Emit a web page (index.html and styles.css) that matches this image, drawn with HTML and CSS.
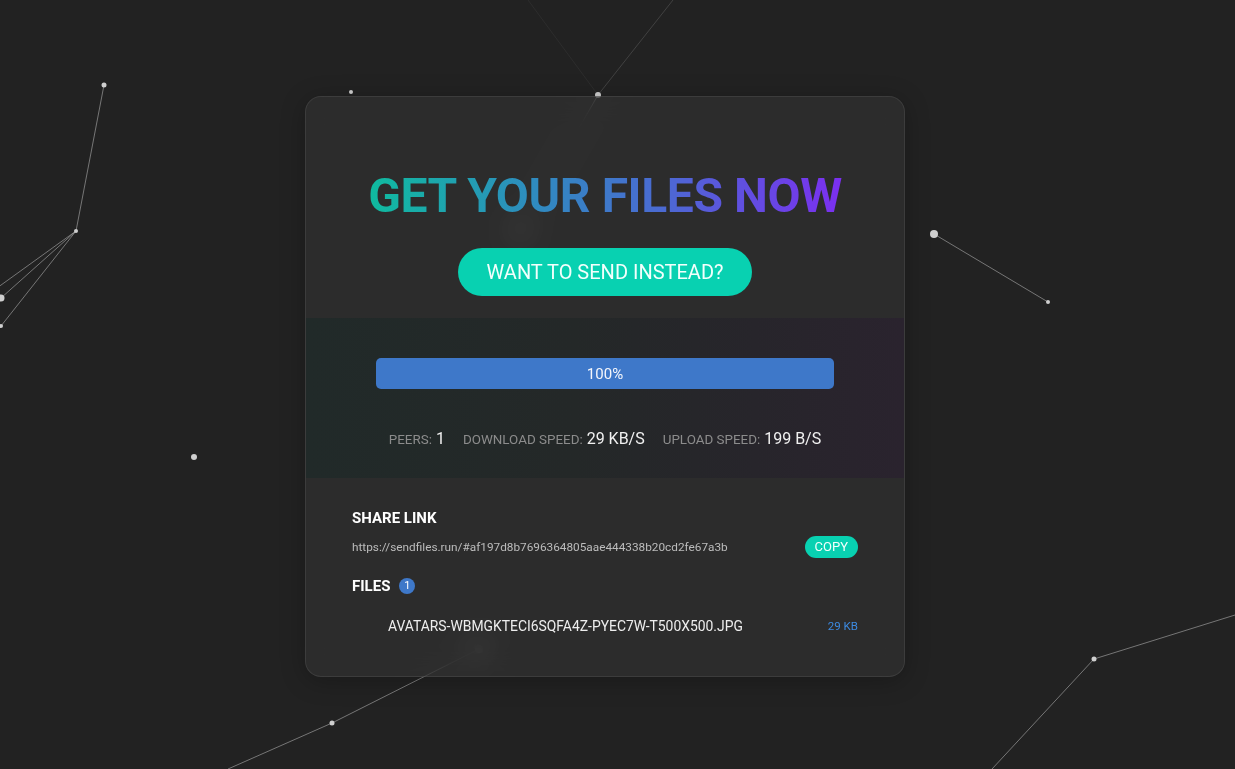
FILE: index.html
```html
<!DOCTYPE html>
<html lang="en">
<head>
<meta charset="utf-8">
<title>Get your files now</title>
<link rel="stylesheet" href="styles.css">
</head>
<body>
<svg class="network" width="1235" height="769" viewBox="0 0 1235 769" aria-hidden="true">
  <g class="links">
    <line x1="104" y1="85" x2="76" y2="231"/>
    <line x1="76" y1="231" x2="-10" y2="293"/>
    <line x1="76" y1="231" x2="1" y2="298"/>
    <line x1="76" y1="231" x2="1" y2="326"/>
    <line x1="598" y1="95" x2="673" y2="0" class="faint"/>
    <line x1="598" y1="95" x2="528" y2="0" class="fainter"/>
    <line x1="598" y1="95" x2="520" y2="230"/>
    <line x1="934" y1="234" x2="1048" y2="302"/>
    <line x1="228" y1="769" x2="332" y2="723"/>
    <line x1="332" y1="723" x2="479" y2="649"/>
    <line x1="1094" y1="659" x2="1235" y2="615"/>
    <line x1="1094" y1="659" x2="992" y2="769"/>
  </g>
  <g class="nodes">
    <circle cx="104" cy="85" r="2.5"/>
    <circle cx="76" cy="231" r="2"/>
    <circle cx="1" cy="298" r="3.5"/>
    <circle cx="1" cy="326" r="2"/>
    <circle cx="351" cy="92" r="2"/>
    <circle cx="598" cy="95" r="3"/>
    <circle cx="520" cy="230" r="4"/>
    <circle cx="934" cy="234" r="4"/>
    <circle cx="1048" cy="302" r="2"/>
    <circle cx="194" cy="457" r="3"/>
    <circle cx="332" cy="723" r="2.5"/>
    <circle cx="479" cy="649" r="4"/>
    <circle cx="1094" cy="659" r="2.5"/>
  </g>
</svg>

<main class="page">
  <section class="card">
    <header class="hero">
      <h1 class="title">GET YOUR FILES NOW</h1>
      <a class="send-btn" href="#">WANT TO SEND INSTEAD?</a>
    </header>

    <div class="status">
      <div class="progress"><span class="progress-label">100%</span></div>
      <div class="stats">
        <span class="stat"><span class="stat-label">PEERS:</span> <span class="stat-value">1</span></span>
        <span class="stat"><span class="stat-label">DOWNLOAD SPEED:</span> <span class="stat-value">29 KB/S</span></span>
        <span class="stat"><span class="stat-label">UPLOAD SPEED:</span> <span class="stat-value">199 B/S</span></span>
      </div>
    </div>

    <div class="details">
      <h2 class="heading">SHARE LINK</h2>
      <div class="link-row">
        <span class="link">https://sendfiles.run/#af197d8b7696364805aae444338b20cd2fe67a3b</span>
        <button class="copy-btn" type="button">COPY</button>
      </div>
      <h2 class="heading files-heading">FILES <span class="badge">1</span></h2>
      <ul class="file-list">
        <li class="file">
          <span class="file-name">AVATARS-WBMGKTECI6SQFA4Z-PYEC7W-T500X500.JPG</span>
          <span class="file-size">29 KB</span>
        </li>
      </ul>
    </div>
  </section>
</main>
</body>
</html>
```

FILE: styles.css
```css
* { box-sizing: border-box; }

html, body {
  margin: 0;
  padding: 0;
  height: 769px;
  overflow: hidden;
}

body {
  background: #222222;
  font-family: Roboto, "Liberation Sans", Arial, sans-serif;
  color: #ffffff;
  position: relative;
}

.network {
  position: absolute;
  left: 0;
  top: 0;
  z-index: 0;
}

.links line {
  stroke: rgba(255, 255, 255, 0.38);
  stroke-width: 1;
}
.links line.faint { stroke: rgba(255, 255, 255, 0.14); }
.links line.fainter { stroke: rgba(255, 255, 255, 0.05); }

.nodes circle { fill: #cfcfcf; }

.page {
  position: relative;
  z-index: 1;
  padding-top: 96px;
  padding-left: 305px;
}

.card {
  width: 600px;
  height: 581px;
  border-radius: 16px;
  border: 1px solid rgba(255, 255, 255, 0.08);
  background: rgba(60, 60, 60, 0.42);
  backdrop-filter: blur(14px);
  -webkit-backdrop-filter: blur(14px);
  box-shadow: 0 4px 24px rgba(0, 0, 0, 0.25);
  overflow: hidden;
  display: flex;
  flex-direction: column;
}

.hero {
  height: 221px;
  padding-top: 71px;
  display: flex;
  flex-direction: column;
  align-items: center;
}

.title {
  margin: 0;
  font-size: 48px;
  line-height: 56px;
  font-weight: 700;
  letter-spacing: -0.4px;
  background: linear-gradient(90deg, #0fbb9f 0%, #2f8bbf 35%, #4b6ad2 62%, #7b2ff0 100%);
  -webkit-background-clip: text;
  background-clip: text;
  color: transparent;
}

.send-btn {
  margin-top: 24px;
  width: 294px;
  height: 48px;
  border-radius: 24px;
  background: #08d1b1;
  color: #f2fffc;
  font-size: 20px;
  font-weight: 400;
  text-decoration: none;
  display: flex;
  align-items: center;
  justify-content: center;
}

.status {
  height: 160px;
  padding: 40px 70px 0 70px;
  background: linear-gradient(90deg, #212a29 0%, #242828 45%, #27252b 75%, #2a232e 100%);
}

.progress {
  height: 31px;
  border-radius: 5px;
  background: #3e78c9;
  display: flex;
  align-items: center;
  justify-content: center;
}

.progress-label {
  font-size: 15px;
  color: #f4f6fb;
}

.stats {
  margin-top: 40px;
  display: flex;
  justify-content: center;
  gap: 18px;
  line-height: 20px;
}

.stat-label {
  font-size: 13.4px;
  color: #8c8c8c;
}

.stat-value {
  font-size: 16px;
  color: #f0f0f0;
}

.details {
  flex: 1;
  padding: 30px 46px 0 46px;
}

.heading {
  margin: 0;
  font-size: 15px;
  line-height: 20px;
  font-weight: 700;
  color: #ffffff;
  display: flex;
  align-items: center;
  gap: 9px;
}

.link-row {
  margin-top: 8px;
  height: 22px;
  display: flex;
  align-items: center;
  justify-content: space-between;
}

.link {
  font-size: 11.8px;
  color: #bcbcbc;
}

.copy-btn {
  height: 22px;
  padding: 0 10px;
  border: 0;
  border-radius: 11px;
  background: #08d1b1;
  color: #f2fffc;
  font-family: inherit;
  font-size: 13px;
  line-height: 22px;
}

.files-heading {
  margin-top: 18px;
}

.badge {
  width: 16px;
  height: 16px;
  border-radius: 50%;
  background: #3e78c9;
  color: #ffffff;
  font-size: 11px;
  font-weight: 400;
  display: inline-flex;
  align-items: center;
  justify-content: center;
}

.file-list {
  list-style: none;
  margin: 20px 0 0 0;
  padding: 0;
}

.file {
  display: flex;
  align-items: center;
  justify-content: space-between;
  padding-left: 36px;
  line-height: 20px;
}

.file-name {
  font-size: 13.9px;
  color: #eeeeee;
}

.file-size {
  font-size: 11.5px;
  color: #3d8ae0;
}
```
